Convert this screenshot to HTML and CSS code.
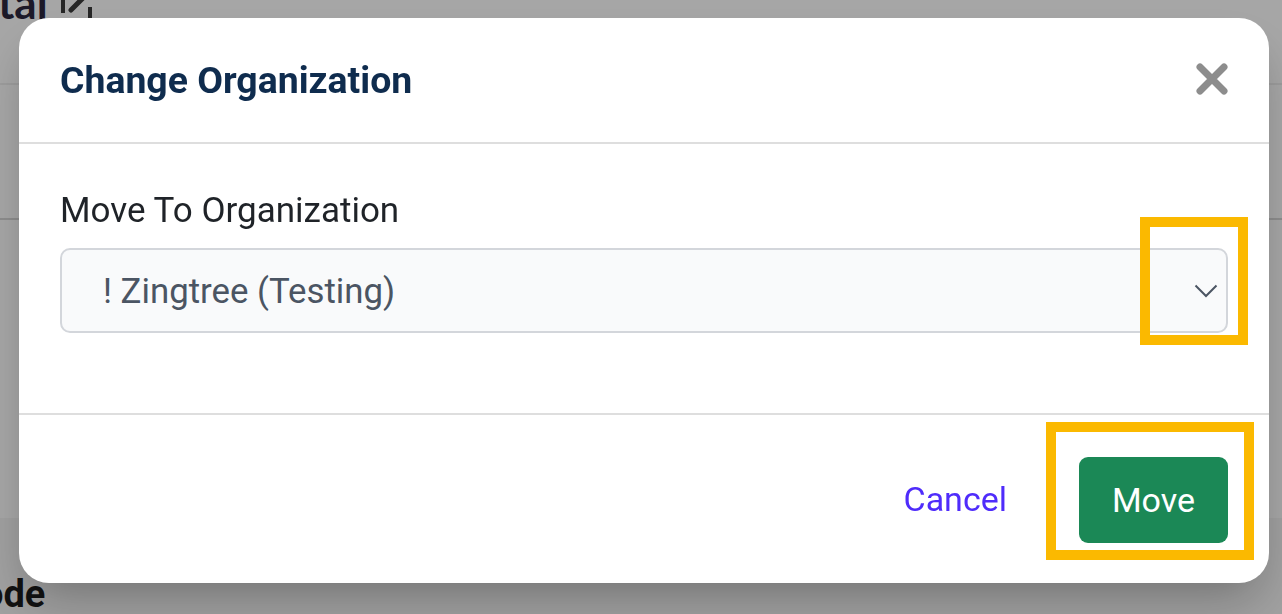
FILE: index.html
```html
<!DOCTYPE html>
<html lang="en">
<head>
<meta charset="utf-8">
<title>Change Organization</title>
<link rel="stylesheet" href="styles.css">
</head>
<body>
  <div class="page">
    <div class="page-head">
      <span class="page-title">tal</span>
      <svg class="page-edit" width="40" height="24" viewBox="0 0 40 24" aria-hidden="true">
        <path d="M3 -10 V17" stroke="#3c3c3c" stroke-width="4" fill="none"/>
        <path d="M11 14 L27 -2" stroke="#3c3c3c" stroke-width="5" stroke-linecap="round" fill="none"/>
        <path d="M30 11 V24" stroke="#3c3c3c" stroke-width="4" fill="none"/>
      </svg>
    </div>
    <div class="page-band"></div>
    <div class="page-main"></div>
    <div class="page-foot"><span class="page-sub">ode</span></div>
  </div>

  <div class="overlay">
    <div class="modal" role="dialog" aria-labelledby="modal-title">
      <div class="modal-header">
        <h2 class="modal-title" id="modal-title">Change Organization</h2>
        <button class="close-btn" type="button" aria-label="Close">
          <svg width="34" height="32" viewBox="0 0 34 32">
            <path d="M5 4 L29 28 M29 4 L5 28" stroke="#8d8d8d" stroke-width="7" stroke-linecap="round" fill="none"/>
          </svg>
        </button>
      </div>

      <div class="modal-body">
        <label class="field-label" for="org">Move To Organization</label>
        <div class="select">
          <span class="select-value">! Zingtree (Testing)</span>
          <svg class="select-chevron" width="24" height="14" viewBox="0 0 24 14">
            <path d="M1.5 1.5 L12 12 L22.5 1.5" stroke="#4b5563" stroke-width="2" fill="none"/>
          </svg>
          <span class="mark mark-chevron"></span>
        </div>
      </div>

      <div class="modal-footer">
        <button class="btn-link" type="button">Cancel</button>
        <div class="move-wrap">
          <button class="btn-primary" type="button">Move</button>
          <span class="mark mark-move"></span>
        </div>
      </div>
    </div>
  </div>
</body>
</html>
```

FILE: styles.css
```css
* {
  box-sizing: border-box;
}

html, body {
  margin: 0;
  padding: 0;
  width: 1282px;
  height: 614px;
  overflow: hidden;
  font-family: Roboto, "Noto Sans", Arial, sans-serif;
}

/* page behind the dialog */
.page {
  display: flex;
  flex-direction: column;
  height: 614px;
  background: #ffffff;
}

.page-head {
  display: flex;
  align-items: flex-start;
  gap: 12px;
  height: 88px;
  border-bottom: 2px solid #efefef;
}

.page-title {
  display: block;
  margin-top: -20px;
  margin-left: -2px;
  font-family: Lato, "Noto Sans", sans-serif;
  font-weight: 700;
  font-size: 44px;
  line-height: 44px;
  color: #2c273e;
}

.page-edit {
  margin-top: -4px;
}

.page-band {
  height: 140px;
  border-bottom: 2px solid #d8d8d8;
}

.page-main {
  height: 309px;
}

.page-foot {
  flex: 1;
  background: #f6f6f6;
  padding-top: 56px;
}

.page-sub {
  display: block;
  margin-left: -18px;
  font-weight: 700;
  font-size: 38px;
  line-height: 40px;
  color: #1b1b1b;
}

/* dialog */
.overlay {
  position: fixed;
  inset: 0;
  background: rgba(0, 0, 0, 0.35);
  padding: 18px 0 0 19px;
}

.modal {
  position: relative;
  width: 1250px;
  height: 565px;
  background: #ffffff;
  border-radius: 30px;
  box-shadow: 0 24px 48px -10px rgba(0, 0, 0, 0.28);
  display: flex;
  flex-direction: column;
}

.modal-header {
  display: flex;
  align-items: center;
  justify-content: space-between;
  height: 126px;
  padding: 0 40px 0 41px;
  border-bottom: 2px solid #dedede;
}

.modal-title {
  margin: 0;
  font-size: 37.4px;
  font-weight: 700;
  color: #0f2c4e;
}

.close-btn {
  border: 0;
  background: none;
  padding: 0;
  display: flex;
  margin-top: -2px;
}

.modal-body {
  padding: 46px 41px 0 41px;
  height: 271px;
  border-bottom: 2px solid #dedede;
}

.field-label {
  display: block;
  font-size: 35px;
  line-height: 42px;
  color: #1f2328;
  margin-bottom: 16px;
}

.select {
  position: relative;
  display: flex;
  align-items: center;
  justify-content: space-between;
  height: 85px;
  padding: 0 8px 0 41px;
  background: #f9fafb;
  border: 2px solid #d3d6db;
  border-radius: 10px;
}

.select-value {
  font-size: 34.8px;
  color: #4b5563;
}

.modal-footer {
  flex: 1;
  display: flex;
  align-items: center;
  justify-content: flex-end;
  gap: 72px;
  padding: 0 41px 0 0;
}

.btn-link {
  border: 0;
  background: none;
  padding: 0;
  font-family: inherit;
  font-size: 34px;
  color: #4f2cfb;
}

.move-wrap {
  position: relative;
}

.btn-primary {
  display: block;
  width: 149px;
  height: 86px;
  border: 0;
  border-radius: 9px;
  background: #1b8856;
  color: #ffffff;
  font-family: inherit;
  font-size: 34px;
  margin-top: 2px;
}

/* highlight frames */
.mark {
  position: absolute;
  border: 10px solid #fbb900;
  pointer-events: none;
}

.mark-chevron {
  left: 1078px;
  top: -33px;
  width: 108px;
  height: 128px;
}

.mark-move {
  left: -33px;
  top: -33px;
  width: 208px;
  height: 138px;
}
```
